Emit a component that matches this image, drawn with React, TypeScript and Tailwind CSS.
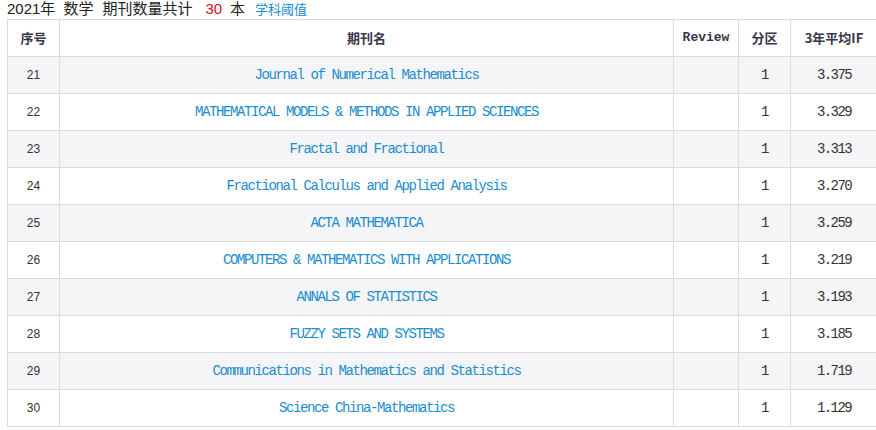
import React from "react";

const rows: [number, string, string][] = [
  [21, "Journal of Numerical Mathematics", "3.375"],
  [22, "MATHEMATICAL MODELS & METHODS IN APPLIED SCIENCES", "3.329"],
  [23, "Fractal and Fractional", "3.313"],
  [24, "Fractional Calculus and Applied Analysis", "3.270"],
  [25, "ACTA MATHEMATICA", "3.259"],
  [26, "COMPUTERS & MATHEMATICS WITH APPLICATIONS", "3.219"],
  [27, "ANNALS OF STATISTICS", "3.193"],
  [28, "FUZZY SETS AND SYSTEMS", "3.185"],
  [29, "Communications in Mathematics and Statistics", "1.719"],
  [30, "Science China-Mathematics", "1.129"],
];

const grid = "grid grid-cols-[52px_614px_65px_52px_88px]";
const cell = "flex items-center justify-center border-l border-[#dcdcdc]";
const mono = "font-['Liberation_Mono','Noto_Sans_CJK_SC',monospace]";

export default function App() {
  return (
    <div className="w-[876px] h-[430px] overflow-hidden bg-white">
      <div className="h-[19px] pl-[7px] whitespace-nowrap leading-[17px] text-[15px] text-[#222] font-['Liberation_Sans','Noto_Sans_CJK_SC',sans-serif]">
        <span>2021年</span>
        <span className="ml-[8px]">数学</span>
        <span className="ml-[9px]">期刊数量共计</span>
        <span className="ml-[13px] text-[#d0101b]">30</span>
        <span className="ml-[8px]">本</span>
        <span className="ml-[10px] text-[13px] text-[#1a8ccf]">学科阈值</span>
      </div>
      <div className="ml-[7px] w-[871px]">
        <div className={`${grid} h-[38px] border-t border-b border-[#dcdcdc] bg-white text-[13px] font-bold text-[#38364a] font-['Noto_Sans_CJK_SC',sans-serif]`}>
          <div className={cell}>序号</div>
          <div className={cell}>期刊名</div>
          <div className={`${cell} ${mono} tracking-[0px]`}>Review</div>
          <div className={cell}>分区</div>
          <div className={`${cell} border-r`}>3年平均IF</div>
        </div>
        {rows.map(([n, name, f], i) => (
          <div
            key={n}
            className={`${grid} h-[37px] border-b border-[#dcdcdc] ${i % 2 === 0 ? "bg-[#f5f5f7]" : "bg-white"}`}
          >
            <div className={`${cell} text-[12px] text-[#333] font-['Liberation_Sans',sans-serif]`}>{n}</div>
            <div className={`${cell} ${mono} text-[14px] tracking-[-1.4px] text-[#1a8ccf] whitespace-nowrap`}>{name}</div>
            <div className={cell}></div>
            <div className={`${cell} ${mono} text-[14px] tracking-[-1.4px] text-[#333]`}>1</div>
            <div className={`${cell} border-r ${mono} text-[14px] tracking-[-1.6px] text-[#333]`}>{f}</div>
          </div>
        ))}
      </div>
    </div>
  );
}
